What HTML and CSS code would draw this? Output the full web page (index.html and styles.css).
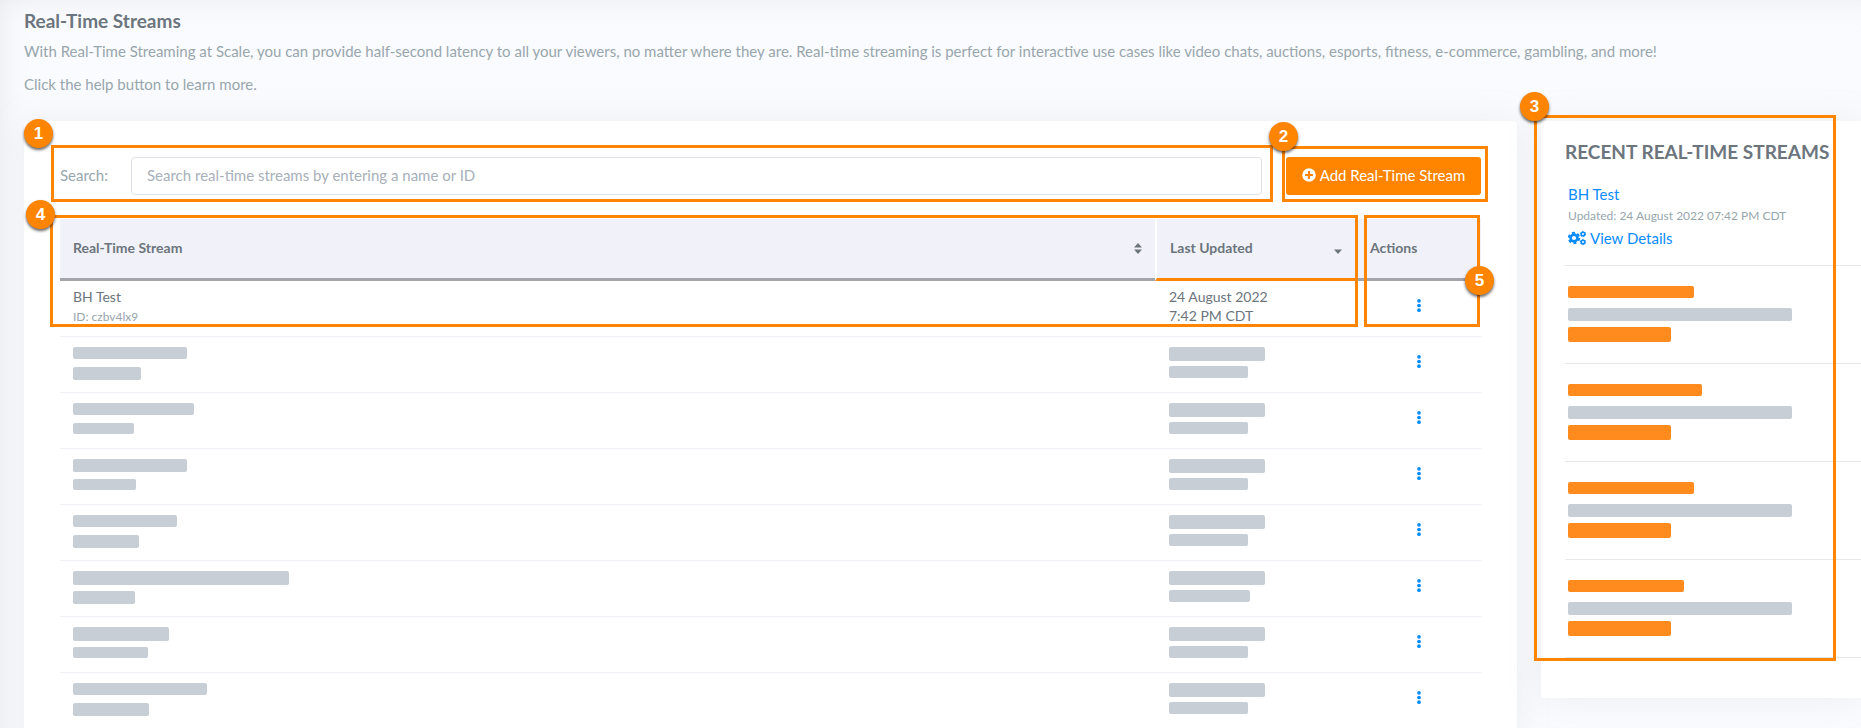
FILE: index.html
```html
<!DOCTYPE html>
<html lang="en">
<head>
    <meta charset="UTF-8">
    <title>Real-Time Streams</title>
    <link rel="stylesheet" href="styles.css">
</head>
<body>
    <svg class="sprite">
        <symbol id="plus" viewBox="0 0 512 512"><path d="M256 8a248 248 0 1 0 0 496 248 248 0 0 0 0-496zm144 276c0 7-5 12-12 12h-92v92c0 7-5 12-12 12h-56c-7 0-12-5-12-12v-92h-92c-7 0-12-5-12-12v-56c0-7 5-12 12-12h92v-92c0-7 5-12 12-12h56c7 0 12 5 12 12v92h92c7 0 12 5 12 12v56z"/></symbol>
        <symbol id="dots" viewBox="0 0 4 14"><circle cx="2" cy="2" r="2"/><circle cx="2" cy="7" r="2"/><circle cx="2" cy="12" r="2"/></symbol>
        <symbol id="sort" viewBox="0 0 8 11"><path d="M4 0l4 4.500H0zM4 11l4-4.500H0z"/></symbol>
        <symbol id="down" viewBox="0 0 8 11"><path d="M4 11l4-4.500H0z"/></symbol>
        <symbol id="gears" viewBox="0 0 18 14">
            <circle cx="6" cy="7" r="3.400" fill="none" stroke="currentColor" stroke-width="2.600"/>
            <circle cx="6" cy="7" r="5.200" fill="none" stroke="currentColor" stroke-width="2" stroke-dasharray="3 2.445"/>
            <circle cx="15" cy="3" r="1.800" fill="none" stroke="currentColor" stroke-width="1.600"/>
            <circle cx="15" cy="3" r="2.600" fill="none" stroke="currentColor" stroke-width="1" stroke-dasharray="1.500 1.223"/>
            <circle cx="15" cy="11" r="1.800" fill="none" stroke="currentColor" stroke-width="1.600"/>
            <circle cx="15" cy="11" r="2.600" fill="none" stroke="currentColor" stroke-width="1" stroke-dasharray="1.500 1.223"/>
        </symbol>
    </svg>
    <div id="page">
        <header class="intro">
            <h1>Real-Time Streams</h1>
            <p>With Real-Time Streaming at Scale, you can provide half-second latency to all your viewers, no matter where they are. Real-time streaming is perfect for interactive use cases like video chats, auctions, esports, fitness, e-commerce, gambling, and more!</p>
            <p>Click the help button to learn more.</p>
        </header>
        <div class="columns">
            <main class="card streams">
                <div class="toolbar">
                    <div class="search">
                        <label for="search">Search:</label>
                        <input id="search" type="text" placeholder="Search real-time streams by entering a name or ID">
                        <div class="mark mark-search"><span class="num">1</span></div>
                    </div>
                    <div class="add">
                        <button type="button" class="btn"><svg class="i-plus"><use href="#plus"/></svg>Add Real-Time Stream</button>
                        <div class="mark mark-add"><span class="num">2</span></div>
                    </div>
                </div>
                <div class="table-wrap">
                    <table>
                        <thead>
                            <tr>
                                <th>Real-Time Stream<svg class="i-sort"><use href="#sort"/></svg></th>
                                <th class="col-date sorted">Last Updated<svg class="i-sort"><use href="#down"/></svg></th>
                                <th class="col-act">Actions</th>
                            </tr>
                        </thead>
                        <tbody id="rows">
                            <tr>
                                <td>BH Test<small>ID: czbv4lx9</small></td>
                                <td class="date">24 August 2022<br>7:42 PM CDT</td>
                                <td class="act"><button type="button" class="more" aria-label="Actions"><svg class="i-dots"><use href="#dots"/></svg></button></td>
                            </tr>
                        </tbody>
                    </table>
                    <div class="mark mark-table"><span class="num">4</span></div>
                    <div class="mark mark-act"><span class="num">5</span></div>
                </div>
            </main>
            <aside class="card recent">
                <h2>Recent Real-Time Streams</h2>
                <ul id="recent">
                    <li>
                        <a href="#" class="name">BH Test</a>
                        <p>Updated: 24 August 2022 07:42 PM CDT</p>
                        <a href="#" class="details"><svg class="i-gears"><use href="#gears"/></svg>View Details</a>
                    </li>
                </ul>
                <div class="mark mark-recent"><span class="num">3</span></div>
            </aside>
        </div>
    </div>
    <script>
        // name width, name height, id width, id height, time width
        var rows = [
            [114, 12, 68, 13, 79],
            [121, 12, 61, 11, 79],
            [114, 13, 63, 11, 79],
            [104, 12, 66, 13, 79],
            [216, 14, 62, 13, 81],
            [96, 14, 75, 11, 79],
            [134, 12, 76, 13, 79]
        ];
        var recent = [126, 134, 126, 116];
        var oRows = document.getElementById("rows");
        var oRecent = document.getElementById("recent");
        var sMore = oRows.getElementsByClassName("act")[0].innerHTML;

        function bar(w, h, cls){
            return '<div class="line"><div class="bar ' + (cls || "") + '" style="width:' + w + 'px;height:' + h + 'px"></div></div>';
        }
        for(var i=0; i<rows.length; i++){
            var r = rows[i];
            var tr = document.createElement("tr");
            tr.className = "blank";
            tr.innerHTML = '<td>' + bar(r[0], r[1]) + bar(r[2], r[3]) + '</td>' +
                '<td class="date">' + bar(96, 14) + bar(r[4], 12) + '</td>' +
                '<td class="act">' + sMore + '</td>';
            oRows.appendChild(tr);
        }
        for(var j=0; j<recent.length; j++){
            var li = document.createElement("li");
            li.className = "blank";
            li.innerHTML = bar(recent[j], 12, "hot") + bar(224, 13) + bar(103, 15, "hot");
            oRecent.appendChild(li);
        }
    </script>
</body>
</html>
```
FILE: styles.css
```css
*{
    margin: 0;
    padding: 0;
    box-sizing: border-box;
}
body{
    font: 15px/24px Lato, "Open Sans", sans-serif;
    color: #98a6ad;
    background: #fafbfe;
    overflow: hidden;
}
a{
    color: #0a8cff;
    text-decoration: none;
}
li{
    list-style: none;
}
svg{
    fill: currentColor;
}
.sprite{
    display: none;
}
#page{
    min-height: 100vh;
    padding: 8px 0 0 24px;
    box-shadow: inset 14px 12px 28px -14px rgba(154,161,171,.2);
}
.intro{
    height: 113px;
}
.intro h1{
    font-size: 19px;
    line-height: 25px;
    color: #6c757d;
}
.intro p{
    margin: 6px 0 9px;
}
.columns{
    display: flex;
    align-items: flex-start;
    gap: 24px;
}
.card{
    background: #fff;
    box-shadow: 0 0 35px rgba(154,161,171,.15);
    border-radius: 4px;
    position: relative;
}
.streams{
    flex: 1;
    padding: 36px;
}
.toolbar{
    display: flex;
    gap: 24px;
    margin-bottom: 24px;
}
.search{
    flex: 1;
    display: flex;
    align-items: center;
    position: relative;
}
.search label{
    width: 71px;
    padding-bottom: 2px;
}
.search input{
    flex: 1;
    height: 38px;
    padding: 0 15px 2px;
    border: 1px solid #dee2e6;
    border-radius: 4px;
    font: inherit;
    color: #6c757d;
}
.search input::placeholder{
    color: #a8b0ba;
}
.add{
    position: relative;
}
.btn{
    display: flex;
    align-items: center;
    justify-content: center;
    gap: 4px;
    width: 195px;
    height: 38px;
    padding-bottom: 2px;
    border: 0;
    border-radius: 3px;
    background: #ff8400;
    color: #fff;
    font: inherit;
}
.i-plus{
    width: 14px;
    height: 14px;
}
.table-wrap{
    position: relative;
}
table{
    width: 100%;
    table-layout: fixed;
    border-collapse: separate;
    border-spacing: 0;
    font-size: 14px;
    line-height: 19px;
    color: #6c757d;
}
th{
    height: 62px;
    padding: 0 13px 3px;
    text-align: left;
    background: #f1f2f9;
    border-bottom: 3px solid #a4a5ab;
    position: relative;
}
.col-date{
    width: 202px;
}
.col-act{
    width: 124px;
}
th.sorted{
    border-left: 2px solid #fff;
    border-bottom-color: #ff8400;
}
.i-sort{
    position: absolute;
    right: 13px;
    top: 24px;
    width: 8px;
    height: 11px;
}
.sorted .i-sort{
    right: 15px;
}
td{
    height: 56px;
    padding: 6px 13px 0;
    vertical-align: top;
    border-bottom: 1px solid #eef2f7;
}
td small{
    display: block;
    font-size: 12px;
    line-height: 21px;
    color: #98a6ad;
}
td.date{
    padding-left: 14px;
}
tr.blank td{
    padding-top: 10px;
}
tr.blank .line{
    height: 20px;
}
tr.blank .date .line{
    height: 19px;
}
td.act, tr.blank td.act{
    padding-top: 9px;
    text-align: center;
}
.more{
    border: 0;
    background: none;
    color: #0a8cff;
    height: 34px;
    width: 16px;
}
.i-dots{
    width: 4px;
    height: 13px;
}
.bar{
    background: #c7ced6;
    border-radius: 2px;
}
.bar.hot{
    background: #ff8b1f;
}
.recent{
    width: 320px;
    padding: 19px 0 40px 24px;
    border-radius: 4px 0 0 4px;
}
.recent h2{
    font-size: 19px;
    line-height: 24px;
    color: #6c757d;
    text-transform: uppercase;
}
.recent li{
    height: 98px;
    padding: 20px 0 0 3px;
    border-bottom: 1px solid #e5e7ea;
}
.recent li:first-child{
    height: 102px;
    padding-top: 19px;
}
.recent li p{
    font-size: 12px;
    line-height: 22px;
}
.recent a{
    display: block;
    line-height: 22px;
}
.recent .details{
    display: flex;
    align-items: center;
    gap: 4px;
}
.i-gears{
    width: 18px;
    height: 14px;
}
.recent .line{
    height: 19px;
}
.recent .line:first-child{
    height: 22px;
}
/* numbered callouts */
.mark{
    position: absolute;
    border: 3px solid #ff8400;
    pointer-events: none;
}
.num{
    position: absolute;
    width: 29px;
    height: 29px;
    border-radius: 50%;
    background: #ff8400;
    box-shadow: 0 2px 3px rgba(0,0,0,.6);
    color: #fff;
    font: bold 17px/29px "Liberation Sans", sans-serif;
    text-align: center;
}
.mark-search{
    inset: -12px -11px -7px -9px;
}
.mark-search .num{
    left: -30px;
    top: -29px;
}
.mark-add{
    inset: -11px -7px -7px -4px;
}
.mark-add .num{
    left: -16px;
    top: -27px;
}
.mark-table{
    top: -4px;
    left: -10px;
    right: 123px;
    height: 112px;
}
.mark-table .num{
    left: -27px;
    top: -18px;
}
.mark-act{
    top: -4px;
    right: 1px;
    width: 116px;
    height: 112px;
}
.mark-act .num{
    right: -17px;
    top: 48px;
}
.mark-recent{
    inset: -6px 25px 37px -7px;
}
.mark-recent .num{
    left: -17px;
    top: -26px;
}
```
